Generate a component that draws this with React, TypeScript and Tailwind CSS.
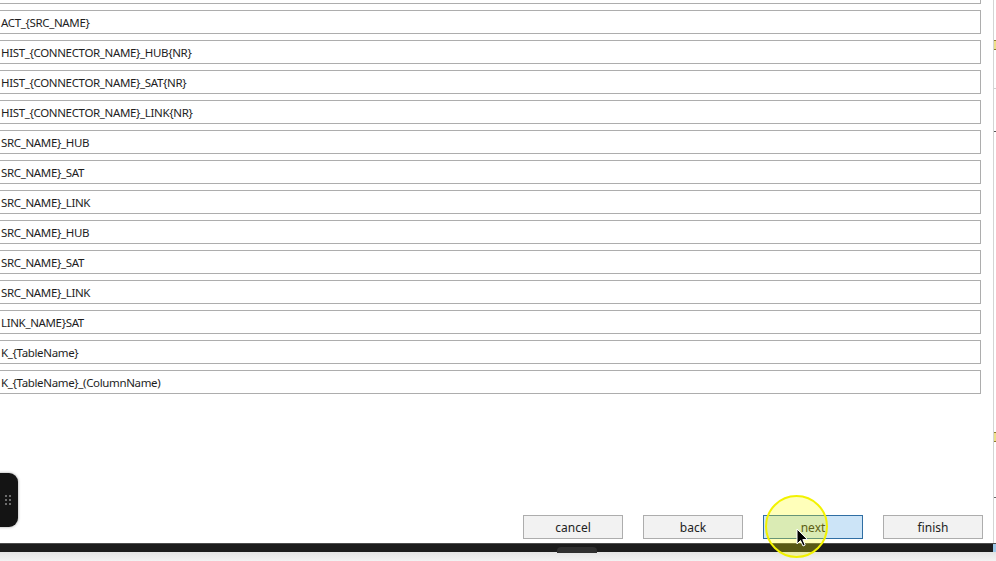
import React from "react";

const rows = [
  "",
  "ACT_{SRC_NAME}",
  "HIST_{CONNECTOR_NAME}_HUB{NR}",
  "HIST_{CONNECTOR_NAME}_SAT{NR}",
  "HIST_{CONNECTOR_NAME}_LINK{NR}",
  "SRC_NAME}_HUB",
  "SRC_NAME}_SAT",
  "SRC_NAME}_LINK",
  "SRC_NAME}_HUB",
  "SRC_NAME}_SAT",
  "SRC_NAME}_LINK",
  "LINK_NAME}SAT",
  "K_{TableName}",
  "K_{TableName}_(ColumnName)",
];

function Btn({ label, active }: { label: string; active?: boolean }) {
  return (
    <div
      className={
        active
          ? "flex h-[24px] w-[100px] items-center justify-center border border-[#2f6ea3] bg-[#cce4f7] pt-px text-[12px] text-[#222]"
          : "flex h-[24px] w-[100px] items-center justify-center border border-[#adadad] bg-[#f2f2f2] pt-px text-[12px] text-[#222]"
      }
    >
      {label}
    </div>
  );
}

export default function App() {
  return (
    <div
      className="relative flex h-[561px] w-[996px] flex-col overflow-hidden bg-white"
      style={{ fontFamily: '"Noto Sans", "Open Sans", sans-serif' }}
    >
      <div className="flex h-[543px]">
        <div className="flex w-[993px] flex-col">
          <div className="-ml-[10px] -mt-[20px] flex flex-col gap-[6px]">
            {rows.map((r, i) => (
              <div
                key={i}
                className="flex h-[24px] w-[991px] items-center border border-[#adadad] bg-white pl-[10px] pt-[2px] text-[11.5px] leading-none tracking-[-0.35px] text-[#1e1e1e]"
              >
                {r}
              </div>
            ))}
          </div>
          <div className="flex-1" />
          <div className="mb-[4px] flex justify-end gap-[20px] pr-[10px]">
            <Btn label="cancel" />
            <Btn label="back" />
            <Btn label="next" active />
            <Btn label="finish" />
          </div>
        </div>
        <div className="relative w-[3px] border-l border-[#d4d4d4] bg-white">
          <div className="absolute left-0 top-[40px] h-[10px] w-[3px] border-y border-[#8a7a30] bg-[#eee08a]" />
          <div className="absolute left-0 top-[88px] h-px w-[3px] bg-[#cfcfcf]" />
          <div className="absolute left-0 top-[131px] h-px w-[3px] bg-[#555]" />
          <div className="absolute left-0 top-[432px] h-[10px] w-[3px] border-y border-[#8a7a30] bg-[#eee08a]" />
          <div className="absolute left-0 top-[497px] h-px w-[3px] bg-[#666]" />
        </div>
      </div>
      <div className="relative h-[9px] border-t border-[#4d4d4d] bg-[#1c1c1c]">
        <div className="absolute left-[557px] top-[3px] h-[6px] w-[40px] rounded-t-[4px] bg-[#303030]" />
        <div className="absolute right-0 top-0 h-full w-[3px] bg-[#9cc8e8]" />
      </div>
      <div className="h-[9px] bg-gradient-to-b from-[#e4e4e4] to-[#f3f3f3]" />

      {/* floating handle */}
      <div className="absolute left-[-10px] top-[473px] flex h-[54px] w-[28px] items-center justify-end rounded-[9px] bg-[#141414] pr-[7px] shadow-[0_0_3px_rgba(0,0,0,0.4)]">
        <div className="grid grid-cols-2 gap-x-[2px] gap-y-[2px]">
          {Array.from({ length: 6 }).map((_, i) => (
            <div key={i} className="h-[2px] w-[2px] rounded-full bg-[#8a8a8a]" />
          ))}
        </div>
      </div>

      {/* cursor highlight */}
      <div className="pointer-events-none absolute left-[765px] top-[495px] h-[63px] w-[63px] rounded-full border-2 border-[#f2f200] bg-[rgba(255,255,0,0.27)]" />
      <svg
        className="pointer-events-none absolute left-[796px] top-[528px]"
        width="13"
        height="20"
        viewBox="0 0 13 20"
      >
        <path
          d="M1 1 L1 16 L4.5 12.5 L7 18 L9.2 17 L6.8 11.6 L11.5 11.6 Z"
          fill="#000"
          stroke="#fff"
          strokeWidth="1"
          strokeLinejoin="round"
        />
      </svg>
    </div>
  );
}
